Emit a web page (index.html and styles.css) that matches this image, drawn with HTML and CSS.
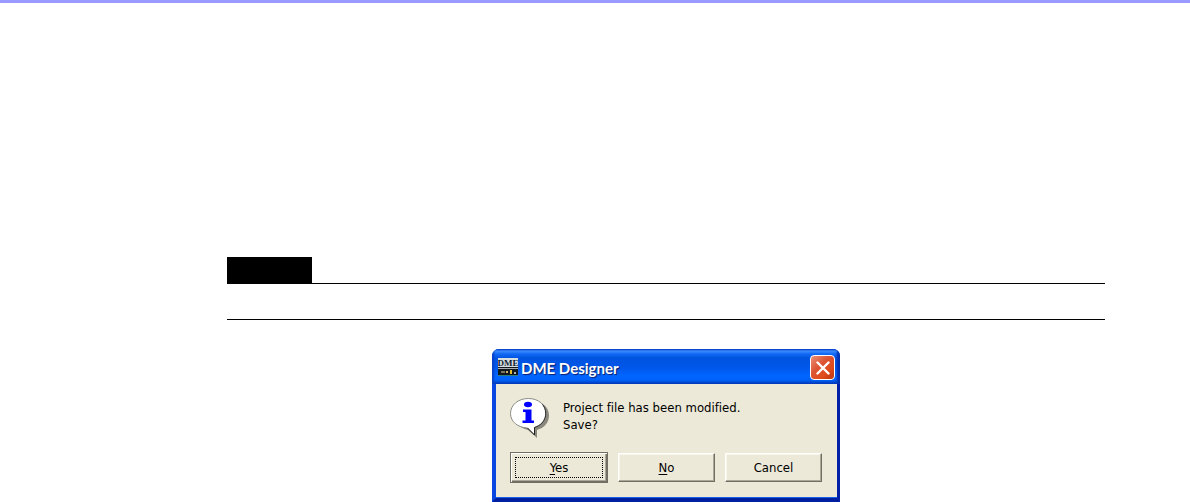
FILE: index.html
```html
<!DOCTYPE html>
<html lang="en">
<head>
<meta charset="utf-8">
<title>DME Designer</title>
<link rel="stylesheet" href="styles.css">
</head>
<body>
<main class="page">
  <section class="note">
    <div class="note-label"></div>
    <div class="note-body"></div>
  </section>
  <section class="dialog" role="dialog" aria-labelledby="dialog-title">
    <header class="titlebar">
      <svg class="app-icon" viewBox="0 0 20 20" aria-hidden="true">
        <path fill="#d8dde0" d="M0 0h20v9H0z"/>
        <text class="app-icon-text" x="10" y="8" text-anchor="middle">DME</text>
        <path fill="#111820" d="M0 9h20v8H0z"/>
        <path fill="#a9adaf" d="M0 10h20v1H0z"/>
        <path fill="#77745a" d="M3 13h4v2H3z"/>
        <path fill="#c9b070" d="M8 13h2v2H8z"/>
        <path fill="#e3bd2c" d="M12 12h2v4h-2z"/>
        <path fill="#a9b2ac" d="M16 14h2v2h-2z"/>
        <path fill="#287c82" d="M0 17h20v1H0z"/>
      </svg>
      <h1 class="title" id="dialog-title">DME Designer</h1>
      <button class="close" type="button" aria-label="Close">
        <svg class="close-icon" viewBox="0 0 14 14" aria-hidden="true"><path fill="none" stroke="#fff" stroke-width="2.4" stroke-linecap="round" d="M1.500 1.500l11 11M12.500 1.500l-11 11"/></svg>
      </button>
    </header>
    <div class="content">
      <div class="message">
        <svg class="info-icon" viewBox="0 0 40 40" aria-hidden="true">
          <path fill="#8a887c" d="M21 2.500C31 2.500 39 8.500 39 17.500c0 7-5 12.500-12 14.500V40l-9-8C9 30 4 24 4 17.500 4 8.500 11 2.500 21 2.500z"/>
          <path fill="#fff" stroke="#8c8c88" stroke-width="1" d="M18.500.500C28.500.500 36 7 36 15.500c0 6.500-4.500 12-11.500 14V37l-7-7C7.500 29.500.500 23.500.500 15.500.500 7 8 .500 18.500.500z"/>
          <path fill="none" stroke="#222" stroke-width="1" d="M32.500 6.500C38 13 37 25.500 24.500 29.500V37l-7-7"/>
          <ellipse cx="18" cy="6.500" rx="4" ry="2.800" fill="#00f"/>
          <path fill="#00f" d="M13 11.500h8.500V22.500H24V25H12.500v-2.500H15.500V14H13z"/>
        </svg>
        <p class="message-text">Project file has been modified.<br>Save?</p>
      </div>
      <div class="actions">
        <button class="button button-default" type="button"><span class="focus"><span><u>Y</u>es</span></span></button>
        <button class="button" type="button"><u>N</u>o</button>
        <button class="button" type="button">Cancel</button>
      </div>
    </div>
  </section>
</main>
</body>
</html>
```
FILE: styles.css
```css
* { box-sizing: border-box; }
body { margin: 0; background: #fff; }
.page {
  border-top: 3px solid #9999ff;
  padding: 254px 85px 0 227px;
}
.note { margin-bottom: 29px; }
.note-label { width: 85px; height: 26px; background: #000; }
.note-body {
  height: 37px;
  border-top: 1px solid #000;
  border-bottom: 1px solid #000;
}
.dialog {
  width: 348px;
  margin: 0 auto;
  border-radius: 7px 7px 0 0;
  overflow: hidden;
  background: #0a48dc;
  font-family: "DejaVu Sans Condensed", "DejaVu Sans", sans-serif;
  font-variant-ligatures: none;
}
.titlebar {
  display: flex;
  align-items: center;
  height: 35px;
  padding: 2px 5px 0 6px;
  background: linear-gradient(#0848c8 0, #3c8cff 2px, #1268f4 5px, #0054e0 9px, #0056e8 18px, #0066ff 27px, #0062fa 31px, #0038b4 35px);
  box-shadow: inset 2px 0 2px #0840c8, inset -3px 0 2px #0030b0;
}
.app-icon { width: 20px; height: 20px; }
.app-icon-text {
  font: bold 9px "Liberation Serif", serif;
  fill: #101c30;
}
.title {
  flex: 1;
  margin: 0 0 0 3px;
  font: bold 15px/20px Lato, "Open Sans", sans-serif;
  color: #fff;
  text-shadow: 1px 1px 1px #0a2070;
}
.close {
  display: flex;
  align-items: center;
  justify-content: center;
  width: 25px;
  height: 25px;
  padding: 0;
  border: 1px solid #fff;
  border-radius: 4px;
  background: linear-gradient(135deg, #ee9078, #dc5434 40%, #e04c1c 70%, #b83410);
}
.close-icon { width: 14px; height: 14px; }
.content {
  padding: 14px 15px 15px 14px;
  border: solid;
  border-width: 0 3px 4px 4px;
  border-color: #0838c8 #0020a8 #0020a0 #0848e0;
  background: #ece9d8;
  box-shadow: inset 0 -1px #1c60e8;
}
.message { display: flex; gap: 13px; height: 54px; }
.info-icon { width: 40px; height: 40px; }
.message-text {
  margin: 1px 0 0;
  font-size: 13px;
  line-height: 17px;
  color: #000;
}
.actions {
  display: grid;
  grid-template-columns: 98fr 97fr 97fr;
  align-items: center;
  gap: 10px;
}
.button {
  height: 29px;
  padding: 0;
  border: 1px solid;
  border-color: #fff #716f64 #716f64 #fff;
  background: #ece9d8;
  box-shadow: inset -1px -1px #aca899, inset 1px 1px #f8f6ec;
  font-family: inherit;
  font-size: 13px;
  line-height: 17px;
  color: #000;
}
.button u { text-underline-offset: 2px; }
.button-default {
  height: 31px;
  padding: 4px;
  border-color: #716f64;
  box-shadow: inset 1px 1px #fff, inset -1px -1px #716f64, inset -2px -2px #aca899;
}
.focus {
  display: flex;
  align-items: center;
  justify-content: center;
  height: 100%;
  border: 1px dotted #000;
}
```
